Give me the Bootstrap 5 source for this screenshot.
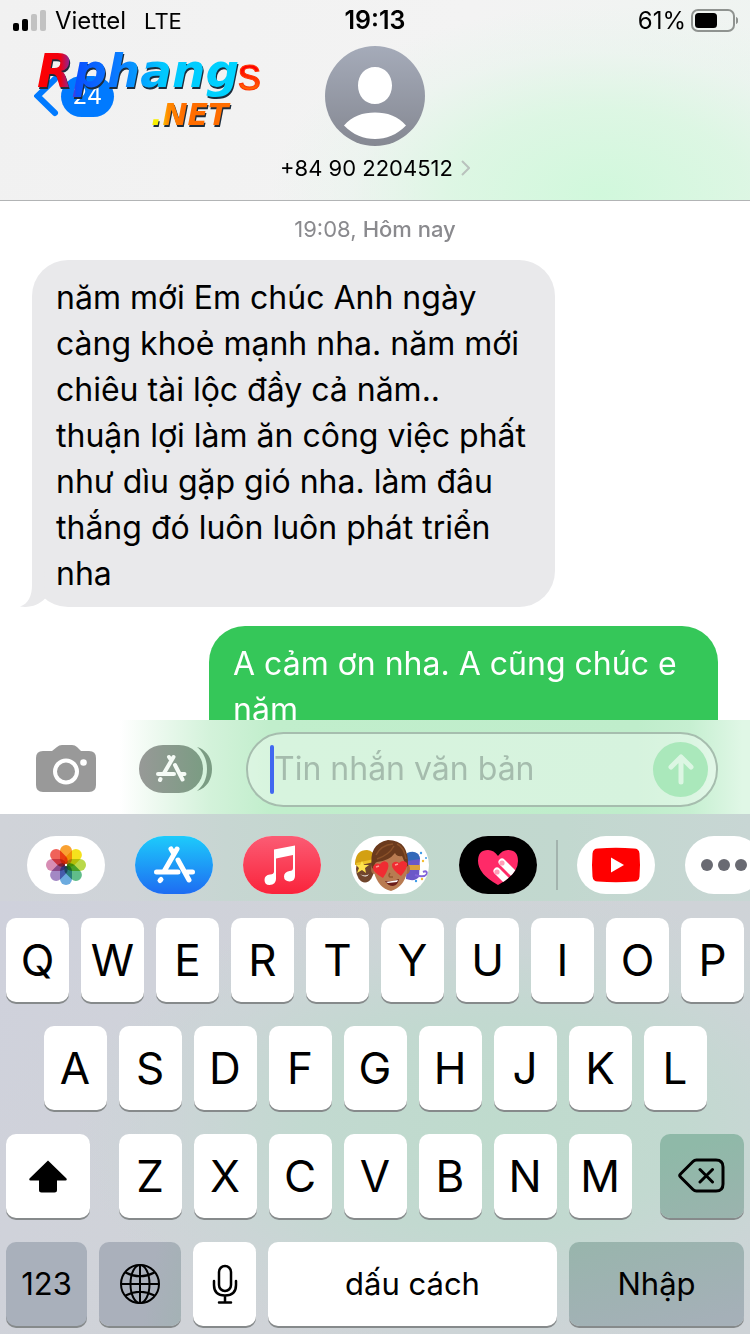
<!DOCTYPE html>
<html lang="vi">
<head>
<meta charset="utf-8">
<meta name="viewport" content="width=device-width, initial-scale=1">
<title>Tin nhắn</title>
<link href="https://cdn.jsdelivr.net/npm/bootstrap@5.3.0/dist/css/bootstrap.min.css" rel="stylesheet">
<style>
  body { font-family: Inter, "Noto Sans", sans-serif; color: #000; height: 100vh; }
  button { border: 0; padding: 0; background: none; color: inherit; }
  svg { display: block; }

  /* header */
  .top-panel {
    border-bottom: 1px solid #b2b4b5;
    background:
      radial-gradient(ellipse 330px 190px at 600px 195px, #d1f8dc 0%, #d8f7e0cc 45%, #e4f5ea66 75%, #f3f3f300 100%),
      linear-gradient(100deg, #f1f1f1, #f3f3f3 60%, #eff4f1);
  }
  .status-row { height: 42px; font-size: 24px; padding: 0 12px; }
  .status-row > * { flex: 1 1 0; }
  .carrier { margin: 0 18px 0 9px; }
  .network { font-size: 22px; }
  .clock { font-weight: 600; font-size: 25px; }
  .contact-row { height: 108px; }
  .contact-row > .side { flex: 1 1 0; }
  .back-link { margin-left: 34px; }
  .unread { background: #007aff; color: #fff; width: 53px; height: 41px; border-radius: 21px; font-size: 24px; }
  .number { font-size: 22px; height: 50px; padding-bottom: 14px; }

  /* watermark laid over the header */
  .stamp { left: 34px; top: 40px; width: 240px; height: 96px; pointer-events: none; }
  .stamp .word-mark { filter: drop-shadow(1px 2px 0 #1c2c3c); }

  /* conversation */
  .thread { flex: 1 1 0; min-height: 0; overflow: hidden; padding: 0 32px; }
  .stamp-time { color: #8a8a8e; font-size: 22px; line-height: 28px; padding: 14px 0 17px; }
  .stamp-time span { font-weight: 500; }
  .bubble { font-size: 32px; line-height: 46px; border-radius: 36px; padding: 15px 24px 10px; }
  .bubble-in { background: #e9e9eb; width: 523px; max-width: 100%; }
  .bubble-in svg { left: -12px; bottom: 0; }
  .bubble-out { background: #35c759; color: #fff; width: 509px; max-width: 100%; margin-top: 19px; padding-bottom: 56px; }

  /* composer */
  .composer {
    height: 94px; padding: 4px 32px 0 36px;
    background: linear-gradient(90deg, #fff 16%, #f0faf2 20%, #d3f2da 28%, #c1eecc 36%, #bfedcb 85%, #c6efd1 92%, #e0f7e6 99%);
  }
  .apps-button { margin-left: 43px; }
  .field {
    height: 75px; border: 2px solid #a6bdae; border-radius: 38px; padding: 0 8px 0 22px;
    background: rgba(255,255,255,.36); margin-left: 33px; min-width: 0;
  }
  .field input { border: 0; background: none; outline: 0; font-size: 32px; width: 0; padding: 0; color: #000; }
  .field input::placeholder { color: #a5bcad; opacity: 1; }
  .caret { width: 4px; height: 49px; border-radius: 2px; background: #4168f0; }
  .send { width: 55px; height: 55px; border-radius: 50%; background: #aae8bb; }

  /* app strip */
  .apps { height: 87px; padding: 15px 0 0 27px; overflow: hidden;
    background: linear-gradient(90deg, #d0d3d9 0, #cfd4d8 18%, #c7d6d2 30%, #c1d8cd 50%, #c2d8cf 75%, #c8d6d4 100%); }
  .app-pill { width: 78px; height: 58px; border-radius: 29px; overflow: hidden; background: #fff; flex: none; margin-right: 30px; }
  .divider { width: 2px; height: 50px; background: #a3b3ae; margin: 0 19px 0 -11px; flex: none; }

  /* keyboard */
  .keys {
    padding: 17px 6px 8px; gap: 24px;
    background:
      radial-gradient(ellipse 420px 240px at 66% 52%, #bfdbcd 0%, #c2d9d0 45%, #c9d6d5aa 75%, #d0d3d900 100%),
      linear-gradient(120deg, #cfd1dc, #d0d3d8 40%, #ced3d7);
  }
  .key-row { gap: 12px; }
  .key {
    height: 84px; border-radius: 10px; background: #fff; box-shadow: 0 2px 0 #868a8b;
    font-size: 44px; line-height: 84px; text-align: center; min-width: 0;
  }
  .key svg { margin: 0 auto; }
  .ten { width: calc((100% - 108px) / 10); }
  .seven { width: calc((100% - 72px) / 7); }
  .letters { width: calc((100% - 108px) * .7 + 72px); gap: 12px; }
  .wide { width: calc((100% - 108px) / 7.5); }
  .word { font-size: 31px; }
  .dim { background: #a9b0bb; }
  .dim-mid { background: linear-gradient(100deg, #aab0bb 60%, #a4b2b5); }
  .dim-green { background: linear-gradient(160deg, #8fb9a8 20%, #9bb3ae); }
  .dim-mix { background: linear-gradient(165deg, #98b5ac, #a5b0b8 90%); }
  .g-num { flex: 81 1 0; } .g-globe { flex: 82 1 0; } .g-mic { flex: 63 1 0; } .g-space { flex: 289 1 0; } .g-enter { flex: 175 1 0; }
</style>
</head>
<body class="d-flex flex-column overflow-hidden">

<header class="top-panel position-relative">
  <div class="status-row d-flex align-items-center">
    <div class="d-flex align-items-center">
      <svg width="34" height="22" viewBox="0 0 34 22"><rect x="1" y="13" width="6" height="8" rx="2"/><rect x="10" y="9" width="6" height="12" rx="2"/><rect x="19" y="4" width="6" height="17" rx="2" fill="#c2c2c2"/><rect x="28" y="0" width="6" height="21" rx="2" fill="#c2c2c2"/></svg>
      <span class="carrier">Viettel</span><span class="network">LTE</span>
    </div>
    <div class="clock text-center">19:13</div>
    <div class="d-flex align-items-center justify-content-end">
      <span class="me-1">61%</span>
      <svg width="48" height="24" viewBox="0 0 48 24"><rect x="2" y="1" width="42" height="21" rx="6" fill="none" stroke="#8f9390" stroke-width="2"/><rect x="5" y="4" width="22" height="15" rx="3.500"/><path d="M46 8c3 1 3 6 0 7z" fill="#8f9390"/></svg>
    </div>
  </div>
  <div class="contact-row d-flex align-items-center">
    <div class="side d-flex">
      <a href="#" class="back-link d-flex align-items-center text-decoration-none">
        <svg width="27" height="42" viewBox="0 0 27 42"><path d="M21 4 3.500 21 21 38" fill="none" stroke="#007aff" stroke-width="6" stroke-linecap="round"/></svg>
        <span class="unread d-flex align-items-center justify-content-center">24</span>
      </a>
    </div>
    <svg width="100" height="100" viewBox="0 0 100 100"><defs><linearGradient id="av" x2="0" y2="1"><stop stop-color="#a5abb9"/><stop offset="1" stop-color="#858892"/></linearGradient></defs><circle cx="50" cy="50" r="50" fill="url(#av)"/><path d="M50 21c10 0 17 8 17 18.500S60 58 50 58s-17-8-17-18.500S40 21 50 21zM19 79.500C27 70 38 66.500 50 66.500S73 70 81 79.500C72 89 61 93 50 93S28 89 19 79.500z" fill="#fff"/></svg>
    <div class="side"></div>
  </div>
  <div class="number d-flex align-items-center justify-content-center">
    <span>+84 90 2204512</span>
    <svg class="ms-2" width="9" height="16" viewBox="0 0 9 16"><path d="M1 1l7 7-7 7" fill="none" stroke="#b9c2bd" stroke-width="2"/></svg>
  </div>
  <svg class="stamp position-absolute" viewBox="0 0 240 96" font-family="DejaVu Sans" font-weight="700">
    <defs>
      <linearGradient id="wm" gradientUnits="userSpaceOnUse" x1="4" x2="206"><stop stop-color="#f00"/><stop offset=".11" stop-color="#f00010"/><stop offset=".17" stop-color="#7030c0"/><stop offset=".19" stop-color="#0a50ff"/><stop offset=".4" stop-color="#0a7cff"/><stop offset=".62" stop-color="#00c8ff"/><stop offset="1" stop-color="#00d4ff"/></linearGradient>
      <linearGradient id="ws" x2="0" y2="1"><stop offset=".4" stop-color="#f00"/><stop offset=".8" stop-color="#ff6a00"/></linearGradient>
      <linearGradient id="wn" gradientUnits="userSpaceOnUse" x1="118" x2="150"><stop offset=".2" stop-color="#f7ee00"/><stop offset=".5" stop-color="#ff8a00"/><stop offset="1" stop-color="#ff6d00"/></linearGradient>
    </defs>
    <text class="word-mark" x="3" y="47" font-style="italic" font-size="47" fill="url(#wm)">Rphang</text>
    <text x="204" y="50" font-family="Liberation Sans" font-size="46" font-weight="400" fill="url(#ws)" stroke="#ff3300" stroke-width="1">s</text>
    <text class="word-mark" x="117" y="85" font-style="italic" font-size="30" fill="url(#wn)">.NET</text>
  </svg>
</header>

<main class="thread">
  <div class="stamp-time text-center">19:08, <span>Hôm nay</span></div>
  <div class="bubble bubble-in position-relative">
    năm mới Em chúc Anh ngày<br>càng khoẻ mạnh nha. năm mới<br>chiêu tài lộc đầy cả năm..<br>thuận lợi làm ăn công việc phất<br>như dìu gặp gió nha. làm đâu<br>thắng đó luôn luôn phát triển<br>nha
    <svg class="position-absolute" width="28" height="40" viewBox="0 0 28 40"><path d="M12 0V18C12 29 8 37 0 39.500C10 41 19 38 25 31.500L24 0z" fill="#e9e9eb"/></svg>
  </div>
  <div class="bubble bubble-out ms-auto">A cảm ơn nha. A cũng chúc e<br>năm</div>
</main>

<section class="composer d-flex align-items-center">
  <button aria-label="Máy ảnh">
    <svg width="60" height="48" viewBox="0 0 60 48"><path d="M7 6h9l5-4q2-2 5-2h10q3 0 5 2l4 4h8q7 0 7 7v27q0 7-7 7H7q-7 0-7-7V13q0-7 7-7z" fill="#999"/><circle cx="30" cy="26.500" r="11" fill="none" stroke="#fff" stroke-width="4"/><circle cx="47.500" cy="17.500" r="3.300" fill="#fff"/></svg>
  </button>
  <button class="apps-button" aria-label="Ứng dụng">
    <svg width="74" height="48" viewBox="0 0 74 48"><defs><linearGradient id="ag"><stop stop-color="#979997"/><stop offset="1" stop-color="#7b9c83"/></linearGradient></defs><rect width="64" height="48" rx="24" fill="url(#ag)"/><path d="M58 2C68 5 73 14 73 24S68 43 58 46C64 41 68 34 68 24S64 7 58 2z" fill="#7b9c83"/><g fill="none" stroke="#f5fbf6" stroke-width="4" stroke-linecap="round"><path d="M34.500 12 24.500 29M30 12 32 15M36 20 43.500 34.500M19 29H35M42 29H45.500M21.500 34 21 35"/></g></svg>
  </button>
  <div class="field d-flex align-items-center flex-grow-1">
    <span class="caret"></span>
    <input class="flex-grow-1" type="text" placeholder="Tin nhắn văn bản" aria-label="Tin nhắn văn bản">
    <button class="send d-flex align-items-center justify-content-center" aria-label="Gửi">
      <svg width="26" height="32" viewBox="0 0 26 32"><path d="M13 29V4M3 14 13 4 23 14" fill="none" stroke="#dcf6e3" stroke-width="5" stroke-linecap="round" stroke-linejoin="round"/></svg>
    </button>
  </div>
</section>

<nav class="apps d-flex align-items-center" aria-label="Ứng dụng iMessage">
  <button class="app-pill" aria-label="Ảnh">
    <svg width="78" height="58" viewBox="-39 -29 78 58"><defs><rect id="petal" x="-6" y="-20" width="12" height="20" rx="6"/></defs><g style="isolation:isolate"><use href="#petal" fill="#f9a132" style="mix-blend-mode:multiply"/><use href="#petal" fill="#f5e11d" transform="rotate(45)" style="mix-blend-mode:multiply"/><use href="#petal" fill="#b9d84a" transform="rotate(90)" style="mix-blend-mode:multiply"/><use href="#petal" fill="#60bd8a" transform="rotate(135)" style="mix-blend-mode:multiply"/><use href="#petal" fill="#6cabdf" transform="rotate(180)" style="mix-blend-mode:multiply"/><use href="#petal" fill="#a388c4" transform="rotate(225)" style="mix-blend-mode:multiply"/><use href="#petal" fill="#d78db4" transform="rotate(270)" style="mix-blend-mode:multiply"/><use href="#petal" fill="#f0625a" transform="rotate(315)" style="mix-blend-mode:multiply"/></g><circle r="1.200" fill="#fff"/></svg>
  </button>
  <button class="app-pill" aria-label="App Store">
    <svg width="78" height="58" viewBox="0 0 78 58"><defs><linearGradient id="as" x2="0" y2="1"><stop stop-color="#1dcbfb"/><stop offset="1" stop-color="#1e6cf2"/></linearGradient></defs><rect width="78" height="58" fill="url(#as)"/><g fill="none" stroke="#fff" stroke-width="5" stroke-linecap="round"><path d="M42 13 29 35.500M36 13 39 18M43 24 54 44M21.500 36H43M52 36H57.500M26 43.500 25 44.500"/></g></svg>
  </button>
  <button class="app-pill" aria-label="Nhạc">
    <svg width="78" height="58" viewBox="0 0 78 58"><defs><linearGradient id="mu" x2="0" y2="1"><stop stop-color="#fb5c74"/><stop offset="1" stop-color="#fa233b"/></linearGradient></defs><rect width="78" height="58" fill="url(#mu)"/><path d="M31 13.500 52 9.500V40q0 5-5.500 5.500Q41 45 41 40.500T46.500 35q3.500 0 3.500-3V19L33 22.500V43q0 5.500-6.500 6Q21.500 49 21.500 44T27 38.500q4 0 4-3z" fill="#fff"/></svg>
  </button>
  <button class="app-pill" aria-label="Memoji">
    <svg width="78" height="58" viewBox="0 0 78 58">
      <g><ellipse cx="14" cy="33" rx="9" ry="13.500" fill="#70452c"/><path d="M4 27Q5 14 16 14q7 0 8 10L4 29z" fill="#d3a012"/><path d="M5 27l18-4v3L6 30z" fill="#efc52b"/><path d="M11 25l2 4 5 0-4 3 1 5-4-3-5 3 2-5-3-3h4z" fill="#ffe34d"/><path d="M9 38q5 3 9 0-3 5-9 0z" fill="#fff"/></g>
      <g><path d="M56 18q12-4 13 5l-1 18q-4 5-13 2z" fill="#6b58c8"/><path d="M56 17q11-4 13 6l-13 2z" fill="#3368b9"/><path d="M56 29h13v5H56z" fill="#dda23c"/><path d="M64 39q9 3 12-1 0-4-4-2" fill="none" stroke="#8264d9" stroke-width="2"/><g fill="#3d9be9"><circle cx="70" cy="17" r="1.200"/><circle cx="65" cy="45" r="1.200"/><circle cx="75" cy="22" r="1"/></g><g fill="#f5be31"><circle cx="72" cy="25" r="1.200"/><circle cx="71" cy="43" r="1.200"/></g></g>
      <ellipse cx="23" cy="33" rx="3" ry="5" fill="#a86b45"/><ellipse cx="56" cy="33" rx="3" ry="5" fill="#a86b45"/>
      <path d="M23 22Q25 9 40 9T56 23V36Q53 51 40 55 27 52 23 36z" fill="#b97b51"/>
      <path d="M21 32Q17 8 37 4Q58 4 57 30L54 31Q54 25 51 20Q46 21 44 17Q38 25 26 26Q23 27 23 33z" fill="#6b3a1d"/><path d="M25 19Q30 9 42 8M26 23Q38 19 43 10M46 8Q53 11 55 23" fill="none" stroke="#8a5129" stroke-width="1.500"/>
      <g fill="#f02c32"><path d="M32 42Q21 36 22 31q2-5 7-3 4-5 8-1 2 5-5 15z"/><path d="M50 40Q40 33 41 28q3-4 7-1 4-4 8 0 1 5-6 13z"/></g><path d="M25 31l3-1M44 29l3-1" stroke="#ff9b92" stroke-width="1.500"/>
      <path d="M39 37q-2 3 0 4h3" fill="none" stroke="#945831" stroke-width="1.500"/><path d="M34 45q7 1 14-2-1 6-6 7-5 0-8-5z" fill="#6b1d1a"/><path d="M35 46l12-2-1 2-9 1z" fill="#fff"/>
    </svg>
  </button>
  <button class="app-pill" aria-label="Digital Touch">
    <svg width="78" height="58" viewBox="0 0 78 58"><defs><clipPath id="hc"><path id="dh" d="M39 49Q19 38 19 25q0-11 10-11 6 0 10 6 4-6 10-6 10 0 10 11 0 13-20 24z"/></clipPath></defs><rect width="78" height="58" fill="#000"/><use href="#dh" fill="#ff2a68"/><g stroke="#fff" stroke-width="7" stroke-linecap="round" clip-path="url(#hc)"><path d="M43 26 60 43M38 35 52 49"/></g><circle cx="43" cy="27" r="2.600" fill="#ff9db8"/><circle cx="38" cy="36" r="2.600" fill="#ff9db8"/></svg>
  </button>
  <span class="divider"></span>
  <button class="app-pill" aria-label="YouTube">
    <svg width="78" height="58" viewBox="0 0 78 58"><path d="M21 12.500q18-1.500 36 0 5 0 5.500 5 1 11.500 0 23-.5 5-5.500 5-18 1.500-36 0-5 0-5.500-5-1-11.500 0-23 .5-5 5.500-5z" fill="red"/><path d="M34 21.500 47 29 34 36.500z" fill="#fff"/></svg>
  </button>
  <button class="app-pill" aria-label="Thêm">
    <svg width="78" height="58" viewBox="0 0 78 58" fill="#696a72"><circle cx="22" cy="29" r="6"/><circle cx="39" cy="29" r="6"/><circle cx="56" cy="29" r="6"/></svg>
  </button>
</nav>

<section class="keys d-flex flex-column" aria-label="Bàn phím">
  <div class="key-row d-flex">
    <button class="key ten">Q</button><button class="key ten">W</button><button class="key ten">E</button><button class="key ten">R</button><button class="key ten">T</button><button class="key ten">Y</button><button class="key ten">U</button><button class="key ten">I</button><button class="key ten">O</button><button class="key ten">P</button>
  </div>
  <div class="key-row d-flex justify-content-center">
    <button class="key ten">A</button><button class="key ten">S</button><button class="key ten">D</button><button class="key ten">F</button><button class="key ten">G</button><button class="key ten">H</button><button class="key ten">J</button><button class="key ten">K</button><button class="key ten">L</button>
  </div>
  <div class="d-flex justify-content-between">
    <button class="key wide" aria-label="Shift"><svg width="38" height="33" viewBox="0 0 38 33"><path d="M19 .5 37.500 18.500q.8 2-1 2H28V30q0 2.500-2.500 2.500h-13Q10 32.500 10 30V20.500H1.500q-1.800 0-1-2z"/></svg></button>
    <div class="letters d-flex">
      <button class="key seven">Z</button><button class="key seven">X</button><button class="key seven">C</button><button class="key seven">V</button><button class="key seven">B</button><button class="key seven">N</button><button class="key seven">M</button>
    </div>
    <button class="key wide dim-green" aria-label="Xoá"><svg width="48" height="36" viewBox="0 0 48 36" fill="none" stroke="#000" stroke-width="3" stroke-linejoin="round" stroke-linecap="round"><path d="M18.500 2H38q7 0 7 7v17q0 7-7 7H18.500q-2 0-3.500-1.500L2.500 19q-1.500-1.500 0-3L15 3.500Q16.500 2 18.500 2zM22 11.500l12.500 12.500M34.500 11.500 22 24"/></svg></button>
  </div>
  <div class="key-row d-flex">
    <button class="key word dim g-num">123</button>
    <button class="key dim-mid g-globe" aria-label="Đổi ngôn ngữ"><svg width="42" height="42" viewBox="0 0 42 42" fill="none" stroke="#000" stroke-width="2"><circle cx="21" cy="21" r="19"/><ellipse cx="21" cy="21" rx="9.500" ry="19"/><path d="M21 2V40M2 21H40M6.500 9.500Q21 17 35.500 9.500M6.500 32.500Q21 25 35.500 32.500"/></svg></button>
    <button class="key g-mic" aria-label="Đọc chính tả"><svg width="26" height="40" viewBox="0 0 26 40" fill="none" stroke="#000" stroke-width="2.500" stroke-linecap="round"><rect x="7" y="2" width="12" height="25" rx="6"/><path d="M2 17v4Q2 31.500 13 31.500T24 21v-4M13 32v6M7 38.500H19"/></svg></button>
    <button class="key word g-space">dấu cách</button>
    <button class="key word dim-mix g-enter">Nhập</button>
  </div>
</section>

<script src="https://cdn.jsdelivr.net/npm/bootstrap@5.3.0/dist/js/bootstrap.bundle.min.js"></script>
</body>
</html>
